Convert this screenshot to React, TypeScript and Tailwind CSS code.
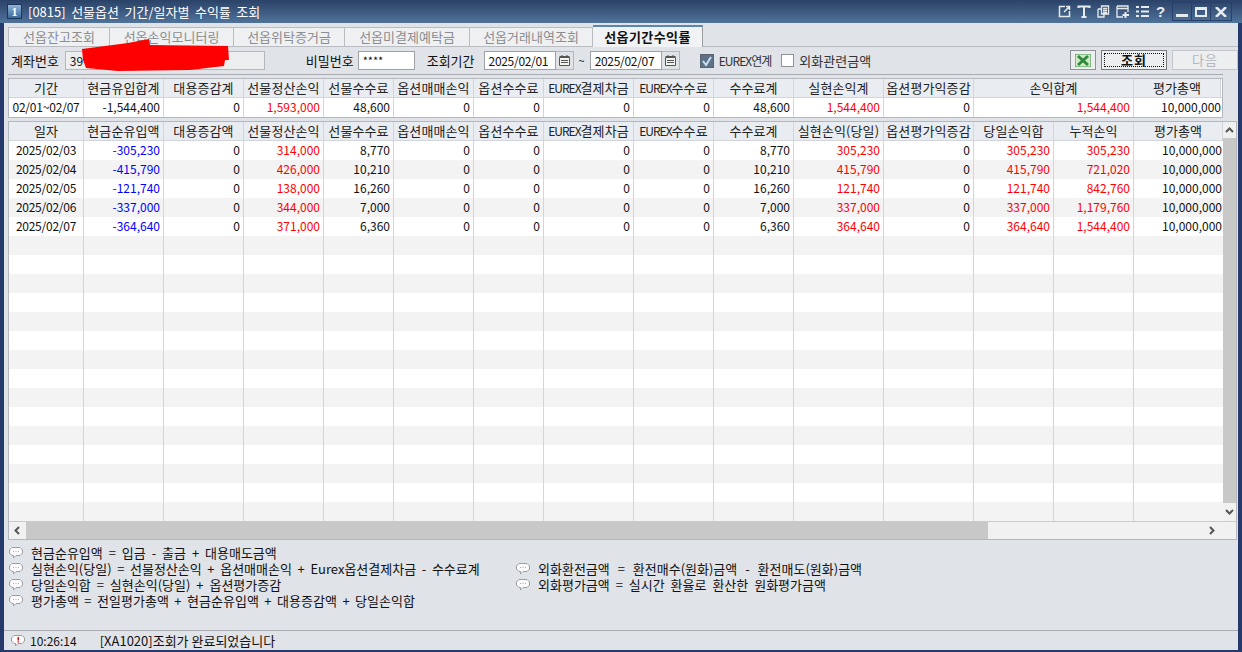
const korean = "font-['Noto_Sans_CJK_KR',sans-serif]"

const topHead = ['기간', '현금유입합계', '대용증감계', '선물정산손익', '선물수수료', '옵션매매손익', '옵션수수료', 'EUREX결제차금', 'EUREX수수료', '수수료계', '실현손익계', '옵션평가익증감', '손익합계', '평가총액']
const topRow = ['02/01~02/07', '-1,544,400', '0', '1,593,000', '48,600', '0', '0', '0', '0', '48,600', '1,544,400', '0', '1,544,400', '10,000,000']
const gridHead = ['일자', '현금순유입액', '대용증감액', '선물정산손익', '선물수수료', '옵션매매손익', '옵션수수료', 'EUREX결제차금', 'EUREX수수료', '수수료계', '실현손익(당일)', '옵션평가익증감', '당일손익합', '누적손익', '평가총액']
const gridRows = [
  ['2025/02/03', '-305,230', '0', '314,000', '8,770', '0', '0', '0', '0', '8,770', '305,230', '0', '305,230', '305,230', '10,000,000'],
  ['2025/02/04', '-415,790', '0', '426,000', '10,210', '0', '0', '0', '0', '10,210', '415,790', '0', '415,790', '721,020', '10,000,000'],
  ['2025/02/05', '-121,740', '0', '138,000', '16,260', '0', '0', '0', '0', '16,260', '121,740', '0', '121,740', '842,760', '10,000,000'],
  ['2025/02/06', '-337,000', '0', '344,000', '7,000', '0', '0', '0', '0', '7,000', '337,000', '0', '337,000', '1,179,760', '10,000,000'],
  ['2025/02/07', '-364,640', '0', '371,000', '6,360', '0', '0', '0', '0', '6,360', '364,640', '0', '364,640', '1,544,400', '10,000,000'],
]
const tabs = [
  { label: '선옵잔고조회', w: 'w-[102px]' },
  { label: '선옵손익모니터링', w: 'w-[124px]' },
  { label: '선옵위탁증거금', w: 'w-[111px]' },
  { label: '선옵미결제예탁금', w: 'w-[125px]' },
  { label: '선옵거래내역조회', w: 'w-[123px]' },
]
const topRed = [3, 10, 12]
const gridRed = [3, 10, 12, 13]

const topCols = 'grid grid-cols-[75px_80px_80px_80px_70px_80px_70px_90px_80px_80px_90px_90px_160px_87px]'
const gridCols = 'grid grid-cols-[75px_80px_80px_80px_70px_80px_70px_90px_80px_80px_90px_90px_80px_80px_89px]'

function Num({ children, className = '' }: { children: React.ReactNode; className?: string }) {
  return (
    <div className={`flex items-center border-r border-[#d2d5d9] overflow-hidden whitespace-nowrap text-[12px] ${className}`}>
      {children}
    </div>
  )
}

function Head({ children }: { children: string }) {
  // the EUREX columns have narrow latin letters in the original font
  const latin = children.startsWith('EUREX')
  return (
    <div className="flex items-center justify-center border-r border-[#d2d5d9] bg-[#e9ecf0] text-[13px] text-[#222] whitespace-nowrap overflow-hidden tracking-[0.1px]">
      {latin ? (
        <>
          <span className="text-[12px] tracking-[-1px]">EUREX</span>
          {children.slice(5)}
        </>
      ) : (
        children
      )}
    </div>
  )
}

function Bubble({ alert }: { alert?: boolean }) {
  return (
    <svg width="14" height="12" viewBox="0 0 14 12" className="shrink-0">
      <path d="M3 .5h8l2.500 2.500v3L11 8.500H7L4.500 11V8.500H3L.5 6V3z" fill="#fbfbfb" stroke="#9a9ea3" />
      {alert ? (
        <path d="M6.500 2h1.500v3.500H6.500zM6.500 6.300h1.500v1.300H6.500z" fill="#e01010" />
      ) : (
        <path d="M4 4.500h1M6.500 4.500h1M9 4.500h1" stroke="#aab" />
      )}
    </svg>
  )
}

function Note({ children, className = '' }: { children: React.ReactNode; className?: string }) {
  return (
    <div className="flex items-center h-[16px]">
      <Bubble />
      <span className={`ml-[8px] text-[13px] leading-[16px] text-[#111] whitespace-nowrap ${className || '[word-spacing:3px]'}`}>{children}</span>
    </div>
  )
}

function Calendar() {
  return (
    <div className="w-[18px] h-[19px] flex items-center justify-center bg-[#dfe2e6] border border-[#b4b7bb] border-l-0">
      <svg width="11" height="11" viewBox="0 0 11 11" fill="none" stroke="#555">
        <path d="M.5 2.500h10v8H.5z" fill="#f5f5f0" />
        <path d="M.5 1.500h10M3 0v3M8 0v3M2 5.500h7M2 7.500h7" />
      </svg>
    </div>
  )
}

function DateBox({ value }: { value: string }) {
  return (
    <div className="flex">
      <div className="w-[72px] h-[19px] flex items-center pl-[4px] bg-white border border-[#9ea1a5] text-[12px] tracking-[-0.3px] text-[#111]">{value}</div>
      <Calendar />
    </div>
  )
}

function TitleIcons() {
  return (
    <div className="flex items-center text-[#e6ebf0] gap-[6px]">
      <svg width="13" height="13" viewBox="0 0 13 13" fill="none" stroke="currentColor" strokeWidth="1.500">
        <path d="M7 1.500H1.500v10h10V6M6 7l5-5M8 1.500h3.500V5" />
      </svg>
      <svg width="14" height="13" viewBox="0 0 14 13" fill="none" stroke="currentColor" strokeWidth="2">
        <path d="M1.500 3V1.500h11V3M7 1.500V12M4.500 12h5" />
      </svg>
      <svg width="13" height="13" viewBox="0 0 13 13" fill="none" stroke="currentColor" strokeWidth="1.300">
        <path d="M4.500 1h7v8h-7zM1 4h3.500M1 4v8h6V9M6 3.500h4M6 5.500h4M6 7.500h4" />
      </svg>
      <svg width="14" height="13" viewBox="0 0 14 13" fill="none" stroke="currentColor" strokeWidth="1.300">
        <path d="M1 1h11v6M1 1v11h6M1 3.500h11" />
        <path d="M9.500 7v6M6.500 10h6.500" strokeWidth="2" />
      </svg>
      <svg width="13" height="13" viewBox="0 0 13 13" fill="none" stroke="currentColor" strokeWidth="2">
        <path d="M0 2h3M5 2h8M0 6.500h3M5 6.500h8M0 11h3M5 11h8" />
      </svg>
      <span className="w-[9px] ml-[1px] text-[15px] font-bold leading-none font-['Liberation_Sans',sans-serif]">?</span>
      <div className="flex ml-[1px] h-[19px] border border-[#27406a]">
        <div className="w-[19px] flex items-end justify-center pb-[3px] border-r border-[#27406a]">
          <div className="w-[12px] h-[3px] bg-[#e6ebf0]" />
        </div>
        <div className="w-[19px] flex items-center justify-center border-r border-[#27406a]">
          <div className="w-[12px] h-[10px] border-2 border-t-[3px] border-[#e6ebf0]" />
        </div>
        <div className="w-[20px] flex items-center justify-center">
          <svg width="12" height="10" viewBox="0 0 12 10" stroke="#e6ebf0" strokeWidth="2.500">
            <path d="M1 0l10 10M11 0L1 10" />
          </svg>
        </div>
      </div>
    </div>
  )
}

export default function App() {
  return (
    <div className={`relative w-[1242px] h-[652px] overflow-hidden flex flex-col bg-[#e0e3e8] ${korean}`}>
      {/* title bar */}
      <div className="h-[23px] shrink-0 flex items-center justify-between pl-[7px] pr-[10px] bg-gradient-to-b from-[#2b4268] to-[#50739a]">
        <div className="flex items-center">
          <div className="w-[15px] h-[15px] flex items-center justify-center bg-gradient-to-b from-[#8fb4d8] to-[#3a6a9c] border border-[#1d3558] text-white text-[12px] font-bold font-['Liberation_Serif',serif]">1</div>
          <span className="ml-[6px] text-[13px] text-white [word-spacing:2.600px]">[0815] 선물옵션 기간/일자별 수익률 조회</span>
        </div>
        <TitleIcons />
      </div>

      <div className="flex-1 flex flex-col min-h-0 border-x-[4px] border-b-[2px] border-[#25396a]">
        {/* tabs */}
        <div className="h-[24px] shrink-0 flex items-end pl-[4px] pt-[1px]">
          {tabs.map((t) => (
            <div key={t.label} className={`${t.w} h-[20px] flex items-center justify-center bg-[#eef0f2] border-r border-y border-[#b9bcc0] first:border-l text-[13px] text-[#8b8d90]`}>
              {t.label}
            </div>
          ))}
          <div className="w-[110px] h-[22px] flex items-center justify-center bg-[#f0f2f4] border-t-[2px] border-t-[#5b86ad] border-r border-[#9b9ea2] text-[13px] font-bold tracking-[0.4px] text-[#111]">
            선옵기간수익률
          </div>
          <div className="flex-1 self-end h-px bg-[#b9bcc0]" />
        </div>

        {/* search controls */}
        <div className="relative h-[27px] shrink-0 flex items-center pl-[7px] text-[13px] text-[#111] whitespace-nowrap">
          <span>계좌번호</span>
          <div className="ml-[6px] w-[200px] h-[19px] flex items-center pl-[4px] bg-[#eceef0] border border-[#b4b7bb] text-[12px]">39</div>
          <span className="ml-[41px]">비밀번호</span>
          <div className="ml-[4px] w-[57px] h-[19px] flex items-center pl-[4px] bg-white border border-[#9ea1a5] text-[11px]">****</div>
          <span className="ml-[12px]">조회기간</span>
          <div className="ml-[9px]"><DateBox value="2025/02/01" /></div>
          <span className="mx-[5px] text-[11px]">~</span>
          <DateBox value="2025/02/07" />
          <div className="ml-[20px] w-[14px] h-[14px] flex items-center justify-center bg-[#5d7288] border border-[#5a6470]">
            <svg width="12" height="12" viewBox="0 0 12 12" fill="none" stroke="#c9e0f2" strokeWidth="2">
              <path d="M2 6l3 4 5-8" />
            </svg>
          </div>
          <span className="ml-[5px] text-[12px] text-[#333] tracking-[-0.95px]">EUREX연계</span>
          <div className="ml-[10px] w-[13px] h-[13px] bg-white border border-[#8f9296]" />
          <span className="ml-[5px] text-[#333]">외화관련금액</span>
          <div className="ml-auto flex items-center gap-[5px] pb-[1px]">
            <div className="w-[26px] h-[20px] flex items-center justify-center bg-[#eceef0] border border-[#8f9296]">
              <svg width="16" height="13" viewBox="0 0 16 13">
                <rect width="16" height="13" fill="#cfe8c8" stroke="#3f8f45" />
                <path d="M3 2l10 9M13 2L3 11" stroke="#2e8b3d" strokeWidth="3" />
              </svg>
            </div>
            <div className="w-[66px] h-[20px] p-[2px] bg-[#eceef0] border border-[#777a7e]">
              <div className="h-full flex items-center justify-center border border-dotted border-[#111] font-bold text-[13px] tracking-[1px]">조회</div>
            </div>
            <div className="w-[66px] h-[20px] flex items-center justify-center bg-[#eceef0] border border-[#c3c6ca] text-[#b3b6ba] tracking-[1px]">다음</div>
          </div>
          {/* redacted account number */}
          <svg className="absolute left-[74px] top-[-9px]" width="160" height="36" viewBox="0 0 160 36">
            <path d="M4 11 50 5 71 1 72 7 150 8 151 22 147 22 146 28 112 32 40 33 8 30 5 22Z" fill="#ff0000" />
          </svg>
        </div>

        {/* period summary */}
        <div className="ml-[4px] mr-[15px] border-t border-[#a9acb0] pt-[3px]">
          <div className="border border-[#b4b7bb] bg-white text-[#111]">
            <div className={`${topCols} h-[19px] border-b border-[#d2d5d9]`}>
              {topHead.map((h) => <Head key={h}>{h}</Head>)}
            </div>
            <div className={`${topCols} h-[19px]`}>
              {topRow.map((v, i) => (
                <Num key={i} className={`pb-[2px] ${topRed.includes(i) ? 'text-[#ff0000]' : ''} ${i === 0 ? 'justify-center tracking-[-0.2px]' : i === 13 ? 'justify-end border-r-0' : 'justify-end pr-[3px]'}`}>{v}</Num>
              ))}
            </div>
          </div>
        </div>

        {/* daily grid */}
        <div className="relative ml-[4px] mr-[1px] mt-[3px] border border-[#b4b7bb] bg-[#f1f1f1]">
          <div className="flex h-[399px]">
            <div className="w-[1214px] overflow-hidden bg-white text-[#111]">
              <div className={`${gridCols} h-[19px] border-b border-[#d2d5d9]`}>
                {gridHead.map((h) => <Head key={h}>{h}</Head>)}
              </div>
              {Array.from({ length: 20 }, (_, r) => (
                <div key={r} className={`${gridCols} h-[19px] ${r % 2 ? 'bg-[#f3f3f3]' : 'bg-white'}`}>
                  {gridHead.map((_, c) => {
                    const v = gridRows[r]?.[c] ?? ''
                    const color = gridRed.includes(c) ? 'text-[#ff0000]' : c === 1 ? 'text-[#0000ff]' : ''
                    return <Num key={c} className={`pb-[1px] ${color} ${c === 0 ? 'justify-center tracking-[-0.25px]' : c === 14 ? 'justify-end pr-[1px] border-r-0' : 'justify-end pr-[3px]'}`}>{v}</Num>
                  })}
                </div>
              ))}
            </div>
            {/* vertical scrollbar */}
            <div className="flex-1 flex flex-col items-center">
              <svg className="my-[5px]" width="9" height="6" viewBox="0 0 9 6" fill="none" stroke="#555" strokeWidth="2"><path d="M1 5l3.500-3.500L8 5" /></svg>
              <div className="self-stretch flex-1 bg-[#c8c8c8]" />
              <svg className="my-[6px]" width="9" height="6" viewBox="0 0 9 6" fill="none" stroke="#555" strokeWidth="2"><path d="M1 1l3.500 3.500L8 1" /></svg>
            </div>
          </div>
          {/* horizontal scrollbar */}
          <div className="h-[18px] flex items-center border-t border-[#c9cbce]">
            <svg className="mx-[5px] shrink-0" width="6" height="9" viewBox="0 0 6 9" fill="none" stroke="#555" strokeWidth="2"><path d="M5 1L1.500 4.500 5 8" /></svg>
            <div className="ml-[1px] w-[962px] h-full bg-[#c8c8c8]" />
            <svg className="ml-auto mr-[21px] shrink-0" width="6" height="9" viewBox="0 0 6 9" fill="none" stroke="#555" strokeWidth="2"><path d="M1 1l3.500 3.500L1 8" /></svg>
          </div>
        </div>

        {/* formula notes */}
        <div className="flex-1 min-h-0 ml-[5px] pt-[5px] grid grid-cols-[507px_1fr] auto-rows-[16px]">
          <Note>현금순유입액 = 입금 - 출금 + 대용매도금액</Note>
          <div />
          <Note className="[word-spacing:2.700px]">실현손익(당일) = 선물정산손익 + 옵션매매손익 + Eurex옵션결제차금 - 수수료계</Note>
          <Note className="[word-spacing:5px]">외화환전금액 = 환전매수(원화)금액 - 환전매도(원화)금액</Note>
          <Note>당일손익합 = 실현손익(당일) + 옵션평가증감</Note>
          <Note>외화평가금액 = 실시간 환율로 환산한 원화평가금액</Note>
          <Note className="[word-spacing:2.600px]">평가총액 = 전일평가총액 + 현금순유입액 + 대용증감액 + 당일손익합</Note>
        </div>

        {/* status bar */}
        <div className="h-[20px] shrink-0 flex items-center pl-[7px] border-t border-[#a9acb0] text-[#111] whitespace-nowrap">
          <Bubble alert />
          <span className="ml-[5px] text-[12px]">10:26:14</span>
          <span className="ml-[23px] text-[13px]">[XA1020]조회가 완료되었습니다</span>
        </div>
      </div>
    </div>
  )
}
